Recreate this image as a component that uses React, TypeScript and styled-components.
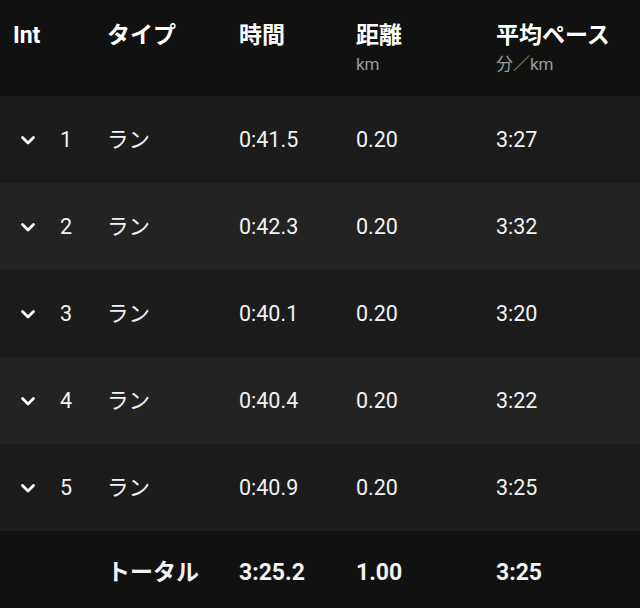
import React from "react";
import styled, { createGlobalStyle } from "styled-components";

const Global = createGlobalStyle`
  html, body { margin: 0; padding: 0; background: #111111; }
  body { font-family: Roboto, "Noto Sans CJK JP", sans-serif; color: #fff; }
`;

const Table = styled.div`
  width: 640px;
  height: 608px;
  display: flex;
  flex-direction: column;
  background: #111111;
`;

const cols = "94px 132px 117px 140px 1fr";

const HeaderRow = styled.div`
  display: grid;
  grid-template-columns: ${cols};
  padding-left: 13px;
  height: 96px;
  box-sizing: border-box;
  padding-top: 21px;
  background: #111111;
`;

const HeadCell = styled.div`
  display: flex;
  flex-direction: column;
`;

const HeadTitle = styled.div`
  font-size: 23px;
  font-weight: 700;
  line-height: 30px;
  color: #ffffff;
`;

const HeadUnit = styled.div`
  font-size: 17px;
  line-height: 20px;
  color: #9a9a9a;
  margin-top: 3px;
`;

const Row = styled.div<{ $alt: boolean }>`
  display: grid;
  grid-template-columns: ${cols};
  padding-left: 13px;
  height: 87px;
  align-items: center;
  background: ${(p) => (p.$alt ? "#232323" : "#1c1c1c")};
`;

const Cell = styled.div<{ $bold?: boolean }>`
  font-size: ${(p) => (p.$bold ? "23px" : "21.5px")};
  line-height: 26px;
  color: #f2f2f2;
  font-weight: ${(p) => (p.$bold ? 700 : 400)};
`;

const IntCell = styled.div`
  display: flex;
  align-items: center;
  padding-left: 6px;
`;

const Chevron = styled.svg`
  width: 18px;
  height: 18px;
  flex: none;
`;

const IntNum = styled.span`
  font-size: 21.5px;
  line-height: 26px;
  color: #f2f2f2;
  margin-left: 23px;
`;

const FooterRow = styled.div`
  display: grid;
  grid-template-columns: ${cols};
  padding-left: 13px;
  flex: 1;
  align-items: center;
  padding-top: 7px;
  background: #111111;
`;

const laps = [
  { n: 1, time: "0:41.5", dist: "0.20", pace: "3:27" },
  { n: 2, time: "0:42.3", dist: "0.20", pace: "3:32" },
  { n: 3, time: "0:40.1", dist: "0.20", pace: "3:20" },
  { n: 4, time: "0:40.4", dist: "0.20", pace: "3:22" },
  { n: 5, time: "0:40.9", dist: "0.20", pace: "3:25" },
];

export default function App() {
  return (
    <>
      <Global />
      <Table>
        <HeaderRow>
          <HeadCell><HeadTitle>Int</HeadTitle></HeadCell>
          <HeadCell><HeadTitle>タイプ</HeadTitle></HeadCell>
          <HeadCell><HeadTitle>時間</HeadTitle></HeadCell>
          <HeadCell>
            <HeadTitle>距離</HeadTitle>
            <HeadUnit>km</HeadUnit>
          </HeadCell>
          <HeadCell>
            <HeadTitle>平均ペース</HeadTitle>
            <HeadUnit>分／km</HeadUnit>
          </HeadCell>
        </HeaderRow>
        {laps.map((l, i) => (
          <Row key={l.n} $alt={i % 2 === 1}>
            <IntCell>
              <Chevron viewBox="0 0 18 18">
                <path d="M3.5 6.5 L9 12 L14.5 6.5" fill="none" stroke="#fff" strokeWidth="2.8" strokeLinecap="round" strokeLinejoin="round" />
              </Chevron>
              <IntNum>{l.n}</IntNum>
            </IntCell>
            <Cell>ラン</Cell>
            <Cell>{l.time}</Cell>
            <Cell>{l.dist}</Cell>
            <Cell>{l.pace}</Cell>
          </Row>
        ))}
        <FooterRow>
          <div />
          <Cell $bold>トータル</Cell>
          <Cell $bold>3:25.2</Cell>
          <Cell $bold>1.00</Cell>
          <Cell $bold>3:25</Cell>
        </FooterRow>
      </Table>
    </>
  );
}
